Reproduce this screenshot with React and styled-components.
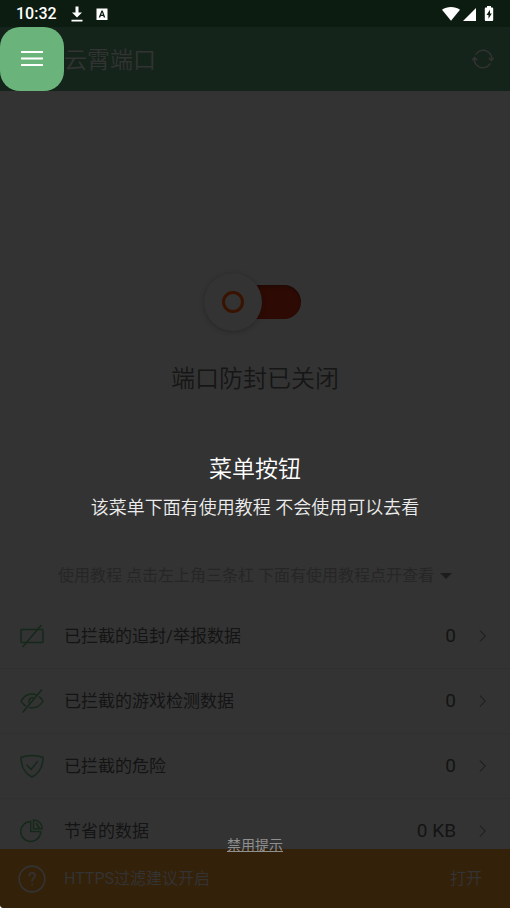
import React from 'react'
import styled, { createGlobalStyle } from 'styled-components'

const GlobalStyle = createGlobalStyle`
  *,
  *::after {
    box-sizing: border-box;
  }
  body {
    margin: 0;
    background: #ffffff;
    font-family: Roboto, "Noto Sans CJK SC", sans-serif;
  }
  button {
    margin: 0;
    padding: 0;
    border: 0;
    background: none;
    font: inherit;
    color: inherit;
  }
`

const Screen = styled.div`
  position: relative;
  display: flex;
  flex-direction: column;
  height: 100vh;
  background: #333333;
  border-bottom-left-radius: 4px;
  overflow: hidden;
`

const StatusBar = styled.div`
  flex: none;
  display: flex;
  align-items: center;
  height: 27px;
  padding: 0 12px 0 16px;
  background: #0c1c10;
  color: #ffffff;
`

const Clock = styled.time`
  margin-right: 12px;
  font-size: 16px;
  font-weight: 500;
  line-height: 27px;
`

const StatusIcons = styled.div`
  display: flex;
  align-items: center;
  margin-left: ${props => (props.$end ? 'auto' : '0')};
`

const Header = styled.header`
  flex: none;
  display: flex;
  align-items: center;
  height: 64px;
  padding-right: 16px;
  background: #15241a;
  color: #333333;
`

const MenuButton = styled.button`
  display: flex;
  align-items: center;
  justify-content: center;
  width: 64px;
  height: 64px;
  border-radius: 20px;
  background: #6ab47c;
`

const AppName = styled.h1`
  flex: 1;
  margin: 0;
  padding-top: 4px;
  font-size: 23px;
  font-weight: 350;
  line-height: 32px;
`

const IconButton = styled.button`
  display: flex;
`

const Main = styled.main`
  flex: 1;
  min-height: 0;
  overflow: hidden;
`

const Hero = styled.section`
  display: flex;
  flex-direction: column;
  align-items: center;
  padding: 182px 16px 16px;
`

const Switch = styled.button`
  display: flex;
  align-items: center;
  width: 102px;
  height: 58px;
  padding-right: 5px;
`

const Knob = styled.span`
  z-index: 1;
  display: flex;
  align-items: center;
  justify-content: center;
  width: 58px;
  height: 58px;
  border-radius: 50%;
  background: #333333;
  box-shadow: 0 1px 5px rgba(0, 0, 0, 0.25);

  &::after {
    content: "";
    width: 22px;
    height: 22px;
    border: 3px solid #391300;
    border-radius: 50%;
  }
`

const Track = styled.span`
  flex: 1;
  height: 34px;
  margin-left: -16px;
  border-radius: 0 17px 17px 0;
  background: #2d0b04;
  box-shadow: inset 0 2px 3px rgba(0, 0, 0, 0.25);
`

const State = styled.h2`
  margin: 31px 0 168px;
  color: #161616;
  font-size: 24px;
  font-weight: 350;
  line-height: 34px;
`

const Guide = styled.button`
  display: flex;
  align-items: center;
  gap: 6px;
  color: #262626;
  font-size: 16px;
  line-height: 24px;
`

const Stats = styled.ul`
  margin: 0;
  padding: 0;
  list-style: none;
`

const StatItem = styled.li`
  border-bottom: 1px solid #303030;
`

const StatButton = styled.button`
  display: flex;
  align-items: center;
  width: 100%;
  height: 64px;
  padding: 0 20px;
  color: #141414;
  text-align: left;
`

const StatLabel = styled.span`
  flex: 1;
  margin-left: 20px;
  font-size: 17px;
  line-height: 24px;
`

const StatValue = styled.span`
  margin-right: 20px;
  font-size: 19px;
  line-height: 24px;
`

const Notice = styled.footer`
  flex: none;
  display: flex;
  align-items: center;
  height: 59px;
  padding: 0 28px 0 18px;
  background: #33210a;
  color: #333333;
  font-size: 16px;
  line-height: 24px;
`

const NoticeText = styled.span`
  flex: 1;
  margin-left: 18px;
`

// sits above the dimmed page
const Tip = styled.div`
  position: absolute;
  top: 0;
  right: 0;
  bottom: 0;
  left: 0;
  display: flex;
  flex-direction: column;
  align-items: center;
  justify-content: flex-end;
  padding-bottom: 53px;
  color: #ffffff;
  text-align: center;
  pointer-events: none;
`

const TipTitle = styled.h2`
  margin: 0;
  font-size: 23px;
  font-weight: 350;
  line-height: 34px;
`

const TipText = styled.p`
  margin: 8px 0 314px;
  color: #ececec;
  font-size: 18px;
  font-weight: 350;
  line-height: 26px;
`

const TipDismiss = styled.button`
  color: #8f8f8f;
  font-size: 14px;
  line-height: 20px;
  text-decoration: underline;
  pointer-events: auto;
`

const LineIcon = ({ size = 24, color = 'currentColor', width = 1.5, children }) => (
  <svg
    width={size}
    height={size}
    viewBox="0 0 24 24"
    fill="none"
    stroke={color}
    strokeWidth={width}
    strokeLinecap="round"
    strokeLinejoin="round"
    aria-hidden="true"
  >
    {children}
  </svg>
)

const GREEN = '#15291b'

const AdIcon = () => (
  <LineIcon color={GREEN}>
    <rect x="1" y="5.5" width="22" height="13" rx="1" />
    <path d="M21 1.5 3 22.5" />
  </LineIcon>
)

const EyeIcon = () => (
  <LineIcon color={GREEN}>
    <path d="M17 6.3C15.600 5.500 14 5 12 5 7 5 3 8.500 1 12c1 1.800 2.600 3.500 4.500 4.800" />
    <path d="M19.300 7.800C21 9 22.200 10.500 23 12c-2.200 4-6.300 6.700-11 6.700-.8 0-1.500-.1-2.200-.2" />
    <path d="M14 9.200a3.700 3.700 0 0 0-5 4.600" />
    <path d="M21.500 1 3 23" />
  </LineIcon>
)

const ShieldIcon = () => (
  <LineIcon color={GREEN}>
    <path d="M12 1.500c3.500 0 7.300.5 11 1.700C23 12 20 19 12 23 4 19 1 12 1 3.200 4.700 2 8.500 1.500 12 1.500z" />
    <path d="m7 11 4 4.500L17.500 7.500" />
  </LineIcon>
)

const PieIcon = () => (
  <LineIcon color={GREEN}>
    <path d="M10.700 2.500A10 10 0 1 0 20.700 12.500H10.700z" />
    <path d="M13.500 1v8.700H22.200A8.700 8.700 0 0 0 13.500 1zM16.500 4.500l3 5" />
  </LineIcon>
)

const stats = [
  { label: '已拦截的追封/举报数据', value: '0', Icon: AdIcon },
  { label: '已拦截的游戏检测数据', value: '0', Icon: EyeIcon },
  { label: '已拦截的危险', value: '0', Icon: ShieldIcon },
  { label: '节省的数据', value: '0 KB', Icon: PieIcon },
]

const Status = () => (
  <StatusBar>
    <Clock>10:32</Clock>
    <StatusIcons>
      <svg width="40" height="18" viewBox="0 0 40 18" fill="#fff" aria-hidden="true">
        <path d="M6.500 1.500h3v6H13l-5 5-5-5h3.500zM2.500 14.800h11v1.600h-11z" />
        <path fillRule="evenodd" d="M27.500 3.500h11v11.500h-11zM32.500 5.500l-2.800 7h1.500l.6-1.600h2.400l.6 1.600h1.500L33.700 5.500zm.6 1.700.8 2.500h-1.700z" />
      </svg>
    </StatusIcons>
    <StatusIcons $end>
      <svg width="56" height="18" viewBox="0 0 56 18" fill="#fff" aria-hidden="true">
        <path d="M0 4.800C5 1.200 13 1.200 18 4.800L9 15.800z" />
        <path d="M21 16 34 3v13z" />
        <path fillRule="evenodd" d="M45 1h4v1.500h1.200a1 1 0 0 1 1 1V15a1 1 0 0 1-1 1h-6.400a1 1 0 0 1-1-1V3.500a1 1 0 0 1 1-1H45zM48 4.800 44.500 10h2v3.700l3.300-5.200h-1.800z" />
      </svg>
    </StatusIcons>
  </StatusBar>
)

const App = () => (
  <>
    <GlobalStyle />
    <Screen>
      <Status />
      <Header>
        <MenuButton type="button" aria-label="菜单">
          <svg width="22" height="16" viewBox="0 0 22 16" fill="#fff" aria-hidden="true">
            <path d="M0 0h22v2H0zM0 6.500h22v2H0zM0 13h22v2H0z" />
          </svg>
        </MenuButton>
        <AppName>云霄端口</AppName>
        <IconButton type="button" aria-label="刷新">
          <LineIcon size={22} width={1.6}>
            <path d="M4.400 6.600A9.300 9.300 0 0 1 21.300 13.500M2.700 10.500A9.300 9.300 0 0 0 19.600 17.400" />
            <path d="M18.700 11.200 21.300 13.700 23.300 11.200M.7 12.800 2.700 10.300 5.300 12.800" />
          </LineIcon>
        </IconButton>
      </Header>
      <Main>
        <Hero>
          <Switch type="button" role="switch" aria-checked="false" aria-label="端口防封">
            <Knob />
            <Track />
          </Switch>
          <State>端口防封已关闭</State>
          <Guide type="button">
            使用教程 点击左上角三条杠 下面有使用教程点开查看
            <svg width="12" height="6" viewBox="0 0 12 6" fill="#1c1c1c" aria-hidden="true">
              <path d="M0 0h12L6 6z" />
            </svg>
          </Guide>
        </Hero>
        <Stats>
          {stats.map(({ label, value, Icon }) => (
            <StatItem key={label}>
              <StatButton type="button">
                <Icon />
                <StatLabel>{label}</StatLabel>
                <StatValue>{value}</StatValue>
                <LineIcon size={14} color="#1c1c1c" width={1.8}>
                  <path d="m7 3 9 9-9 9" />
                </LineIcon>
              </StatButton>
            </StatItem>
          ))}
        </Stats>
      </Main>
      <Notice>
        <LineIcon size={28} width={1.4}>
          <circle cx="12" cy="12" r="11" />
          <path d="M9.600 9.200c0-3.400 5-3.200 5-.2 0 1.900-2.500 2.200-2.500 4.700M12.100 16.500v.5" />
        </LineIcon>
        <NoticeText>HTTPS过滤建议开启</NoticeText>
        <button type="button">打开</button>
      </Notice>
      <Tip>
        <TipTitle>菜单按钮</TipTitle>
        <TipText>该菜单下面有使用教程 不会使用可以去看</TipText>
        <TipDismiss type="button">禁用提示</TipDismiss>
      </Tip>
    </Screen>
  </>
)

export default App
